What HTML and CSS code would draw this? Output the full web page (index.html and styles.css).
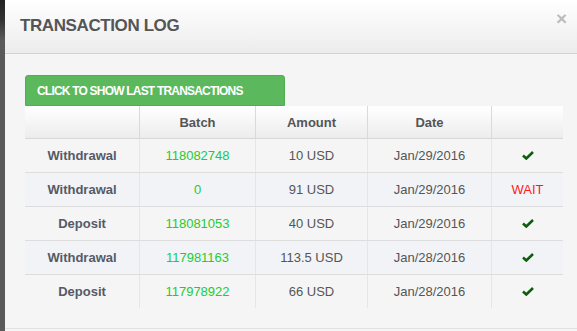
FILE: index.html
```html
<!DOCTYPE html>
<html>
<head>
<meta charset="utf-8">
<link rel="stylesheet" href="styles.css">
</head>
<body>
<div class="backdrop">
  <div class="modal">
    <div class="modal-header">
      <h4 class="modal-title">TRANSACTION LOG</h4>
      <span class="close">&times;</span>
    </div>
    <div class="modal-body">
      <button class="btn-show">CLICK TO SHOW LAST TRANSACTIONS</button>
      <table class="log">
        <thead>
          <tr><th class="c1"></th><th class="c2">Batch</th><th class="c3">Amount</th><th class="c4">Date</th><th class="c5"></th></tr>
        </thead>
        <tbody>
          <tr><td class="type">Withdrawal</td><td class="batch">118082748</td><td>10 USD</td><td>Jan/29/2016</td><td><svg class="ok" width="12" height="9" viewBox="0 0 12 9"><path d="M1 4.5 L4.3 7.5 L11 1" fill="none" stroke="#0b5e0b" stroke-width="2.6"/></svg></td></tr>
          <tr class="alt"><td class="type">Withdrawal</td><td class="batch">0</td><td>91 USD</td><td>Jan/29/2016</td><td class="wait">WAIT</td></tr>
          <tr><td class="type">Deposit</td><td class="batch">118081053</td><td>40 USD</td><td>Jan/29/2016</td><td><svg class="ok" width="12" height="9" viewBox="0 0 12 9"><path d="M1 4.5 L4.3 7.5 L11 1" fill="none" stroke="#0b5e0b" stroke-width="2.6"/></svg></td></tr>
          <tr class="alt"><td class="type">Withdrawal</td><td class="batch">117981163</td><td>113.5 USD</td><td>Jan/28/2016</td><td><svg class="ok" width="12" height="9" viewBox="0 0 12 9"><path d="M1 4.5 L4.3 7.5 L11 1" fill="none" stroke="#0b5e0b" stroke-width="2.6"/></svg></td></tr>
          <tr><td class="type">Deposit</td><td class="batch">117978922</td><td>66 USD</td><td>Jan/28/2016</td><td><svg class="ok" width="12" height="9" viewBox="0 0 12 9"><path d="M1 4.5 L4.3 7.5 L11 1" fill="none" stroke="#0b5e0b" stroke-width="2.6"/></svg></td></tr>
        </tbody>
      </table>
    </div>
    <div class="modal-footer"></div>
  </div>
</div>
</body>
</html>
```

FILE: styles.css
```css
html, body {
  margin: 0;
  padding: 0;
  height: 100%;
  overflow: hidden;
}
body {
  font-family: "Liberation Sans", Arial, sans-serif;
  background: linear-gradient(to bottom, #222 0, #333 20px, #5a5a5a 40px, #5a5a5a 100%);
}
.backdrop {
  display: flex;
  align-items: stretch;
  padding-left: 5px;
  height: 100%;
}
.modal {
  width: 580px;
  flex: none;
  background: #f5f5f5;
  display: flex;
  flex-direction: column;
}
.modal > * { flex-shrink: 0; }
.modal-header {
  height: 53px;
  border-bottom: 1px solid #d2d2d2;
  background: linear-gradient(to bottom, #ffffff 0%, #ececec 100%);
  display: flex;
  align-items: flex-start;
  justify-content: space-between;
  padding: 0 20px 0 15px;
  box-sizing: content-box;
}
.modal-title {
  margin: 0;
  padding-top: 16px;
  font-size: 17px;
  line-height: 20px;
  letter-spacing: -0.4px;
  font-weight: bold;
  color: #555;
}
.close {
  font-size: 19px;
  font-weight: bold;
  line-height: 19px;
  color: #bcbcbc;
  padding-top: 9px;
  margin-right: -2px;
}
.modal-body {
  padding: 21px 20px 20px 20px;
}
.btn-show {
  display: block;
  width: 260px;
  height: 31px;
  background: #5cb85c;
  border: 1px solid #53ad53;
  border-radius: 3px 3px 0 0;
  color: #fff;
  font-family: "Liberation Sans", Arial, sans-serif;
  font-weight: bold;
  font-size: 12px;
  text-align: left;
  padding: 0 0 0 11px;
  letter-spacing: -0.8px;
  margin: 0;
}
.log {
  border-collapse: collapse;
  width: 534px;
  table-layout: fixed;
  font-size: 13px;
  color: #555;
}
.log th {
  height: 32px;
  background: linear-gradient(to bottom, #ffffff 0%, #ececec 100%);
  border-bottom: 1px solid #d8d8d8;
  border-left: 1px solid #dadada;
  font-weight: bold;
  color: #555;
  padding: 0;
  text-align: center;
}
.log th:first-child, .log td:first-child { border-left: none; }
.c1 { width: 114px; }
.c2 { width: 115px; }
.c3 { width: 111px; }
.c4 { width: 123px; }
.c5 { width: 71px; }
.log td {
  height: 33px;
  padding: 0;
  text-align: center;
  border-bottom: 1px solid #dddddd;
  border-left: 1px solid #e6e6e6;
  background: #f5f5f5;
}
.log tr:last-child td { border-bottom: none; }
.log tr.alt td { background: #f2f3f7; }
.log td.type { font-weight: bold; color: #555a66; }
.log td.batch { color: #22cc33; }
.log td.wait { color: #ff1a1a; }
.ok { display: block; margin: 0 auto; }
.modal-footer {
  flex: 1;
  border-top: 1px solid #e2e2e2;
}
```
